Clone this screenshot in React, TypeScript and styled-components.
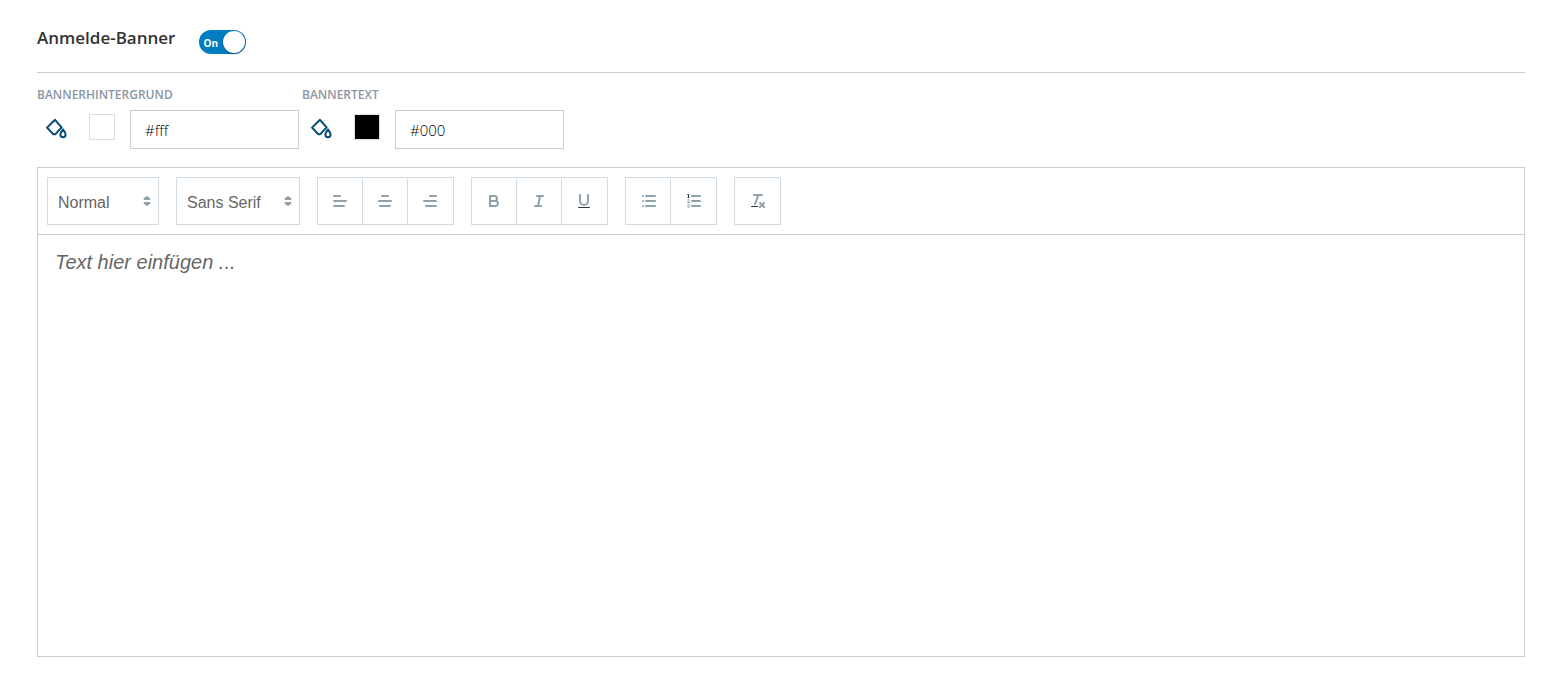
import React, { useState } from "react";
import styled, { createGlobalStyle } from "styled-components";

const GlobalStyle = createGlobalStyle`
  *, *::before, *::after { box-sizing: border-box; }
  body {
    margin: 0;
    background: #fff;
    color: #333;
    font-family: "Open Sans", sans-serif;
  }
`;

const Page = styled.main`
  display: flex;
  flex-direction: column;
  min-height: 100vh;
  padding: 26px 37px 31px;
`;

const Header = styled.header`
  display: flex;
  align-items: flex-start;
  gap: 24px;
  padding-bottom: 18px;
  border-bottom: 1px solid #ccc;
`;

const Title = styled.h1`
  margin: 0;
  font-size: 17px;
  line-height: 24px;
  font-weight: 600;
`;

const Toggle = styled.label`
  position: relative;
  display: flex;
  align-items: center;
  width: 47px;
  height: 24px;
  margin-top: 4px;
  padding: 1px 4px 0;
  border-radius: 12px;
  background: #007dc1;
  color: #fff;
  font-size: 10px;
  line-height: 24px;
  font-weight: 700;
  cursor: pointer;
`;

const ToggleInput = styled.input`
  position: absolute;
  inset: 0;
  width: 100%;
  height: 100%;
  margin: 0;
  opacity: 0;
  cursor: pointer;
`;

const Knob = styled.span`
  position: absolute;
  top: 1px;
  right: 1px;
  width: 22px;
  height: 22px;
  border-radius: 50%;
  background: #fff;
  box-shadow: 0 1px 2px rgba(0, 0, 0, 0.4);
`;

const Colors = styled.div`
  display: flex;
  flex-wrap: wrap;
  gap: 3px;
  padding: 13px 0 18px;
`;

const Field = styled.div`
  display: flex;
  flex-direction: column;
  gap: 6px;
`;

const FieldLabel = styled.label`
  color: #8c96a4;
  font-size: 12px;
  line-height: 18px;
  font-weight: 600;
  text-transform: uppercase;
`;

const FieldRow = styled.div`
  display: flex;
  align-items: flex-start;
`;

const BucketIcon = styled.svg`
  width: 24px;
  height: 24px;
  margin: 6px 21px 0 7px;
  fill: none;
  stroke: #004b77;
  stroke-width: 2;
`;

const Swatch = styled.input`
  appearance: none;
  width: 26px;
  height: 26px;
  margin: 4px 15px 0 0;
  padding: 0;
  border: 1px solid #d5dfe8;
  background: #fff;
  &::-webkit-color-swatch-wrapper { padding: 0; }
  &::-webkit-color-swatch { border: 0; border-radius: 0; }
`;

const HexInput = styled.input`
  width: 169px;
  height: 39px;
  padding: 0 14px;
  border: 1px solid #ccc;
  border-radius: 0;
  color: #000;
  font-family: "Open Sans", sans-serif;
  font-size: 15px;
  font-weight: 300;
`;

const Editor = styled.section`
  flex: 1;
  display: flex;
  flex-direction: column;
  border: 1px solid #ccc;
`;

const Toolbar = styled.div`
  display: flex;
  flex-wrap: wrap;
  gap: 17px;
  padding: 9px;
  border-bottom: 1px solid #ccc;
`;

const Picker = styled.div<{ $width: number }>`
  position: relative;
  width: ${(p) => p.$width}px;
  height: 48px;
`;

const PickerSelect = styled.select`
  appearance: none;
  width: 100%;
  height: 100%;
  padding: 2px 24px 0 10px;
  border: 1px solid #d1dbe3;
  border-radius: 0;
  background: #fff;
  color: #666;
  font-family: "Liberation Sans", Arial, sans-serif;
  font-size: 16px;
`;

const ToolIcon = styled.svg`
  display: block;
  width: 18px;
  height: 18px;
  fill: none;
  stroke: #8fa1ab;
  stroke-width: 2;
  stroke-linecap: round;
  stroke-linejoin: round;
  .thin { stroke-width: 1; }
  .ink { fill: #333; stroke: none; }
`;

const PickerArrows = styled(ToolIcon)`
  position: absolute;
  top: 15px;
  right: 3px;
  fill: #8fa1ab;
  pointer-events: none;
`;

const Group = styled.div`
  display: flex;
  height: 48px;
  padding-top: 1px;
  border: 1px solid #d1dbe3;
`;

const ToolButton = styled.button`
  display: flex;
  justify-content: center;
  width: 45px;
  padding: 13px 0 0;
  border: 0;
  border-right: 1px solid #d1dbe3;
  background: none;
  cursor: pointer;
  &:last-child { border-right-color: transparent; }
`;

const Content = styled.textarea`
  flex: 1;
  min-height: 200px;
  padding: 15px 17px;
  border: 0;
  outline: 0;
  resize: none;
  color: #333;
  font-family: "Liberation Sans", Arial, sans-serif;
  font-size: 20px;
  line-height: 24px;
  &::placeholder {
    color: #666;
    font-style: italic;
    opacity: 1;
  }
`;

const groups: { label: string; icon: React.ReactNode }[][] = [
  [
    { label: "Linksbündig", icon: <path d="M3 9H15M3 14H13M3 4H9" /> },
    { label: "Zentriert", icon: <path d="M15 9H3M14 14H4M12 4H6" /> },
    { label: "Rechtsbündig", icon: <path d="M15 9H3M15 14H5M15 4H9" /> },
  ],
  [
    {
      label: "Fett",
      icon: (
        <>
          <path d="M5 4H9.5A2.5 2.5 0 0 1 12 6.5A2.5 2.5 0 0 1 9.5 9H5Z" />
          <path d="M5 9H10.5A2.5 2.5 0 0 1 13 11.5A2.5 2.5 0 0 1 10.5 14H5Z" />
        </>
      ),
    },
    { label: "Kursiv", icon: <path d="M7 4H13M5 14H11M8 14L10 4" /> },
    {
      label: "Unterstrichen",
      icon: (
        <>
          <path d="M5 3V9a4 4 0 0 0 4 4a4 4 0 0 0 4-4V3" />
          <rect className="ink" x="3" y="15" width="12" height="1" rx="0.5" />
        </>
      ),
    },
  ],
  [
    {
      label: "Aufzählung",
      icon: <path d="M7 4H16M7 9H16M7 14H16M4 4H4M4 9H4M4 14H4" />,
    },
    {
      label: "Nummerierung",
      icon: (
        <g transform="translate(1 0)">
          <path d="M7 4H15M7 9H15M7 14H15" />
          <path className="thin" d="M2.5 5.5H4.5" />
          <path
            className="ink"
            d="M3.5,6A0.5,0.5,0,0,1,3,5.5V3.085l-0.276.138A0.5,0.5,0,0,1,2.053,3c-0.124-.247-0.023-0.324.224-0.447l1-.5A0.5,0.5,0,0,1,4,2.5v3A0.5,0.5,0,0,1,3.5,6Z"
          />
          <path className="thin" d="M4.5,10.5h-2c0-.234,1.85-1.076,1.85-2.234A0.959,0.959,0,0,0,2.5,8.156" />
          <path
            className="thin"
            d="M2.5,14.846a0.959,0.959,0,0,0,1.85-.109A0.7,0.7,0,0,0,3.75,14a0.688,0.688,0,0,0,.6-0.736,0.959,0.959,0,0,0-1.85-.109"
          />
        </g>
      ),
    },
  ],
  [
    {
      label: "Formatierung entfernen",
      icon: (
        <g transform="translate(1 0)">
          <path d="M5 3H13M6 12L9.35 3M11 11L15 15M15 11L11 15" />
          <rect className="ink" x="2" y="14" width="7" height="1" rx="0.5" />
        </g>
      ),
    },
  ],
];

function expandHex(hex: string) {
  return /^#[0-9a-f]{3}$/i.test(hex) ? "#" + hex.slice(1).replace(/./g, "$&$&") : hex;
}

function ColorField({ id, label, initial }: { id: string; label: string; initial: string }) {
  const [value, setValue] = useState(initial);
  return (
    <Field>
      <FieldLabel htmlFor={id}>{label}</FieldLabel>
      <FieldRow>
        <BucketIcon viewBox="0 0 24 24" aria-hidden="true">
          <path d="M11 3.8L3 11.6L9.4 18.2H11.4L17.6 11.4Z" strokeLinejoin="round" />
          <path d="M19 13.6C17.6 15.4 16.4 16.8 16.4 18.6A2.6 2.6 0 0 0 21.6 18.6C21.6 16.8 20.4 15.4 19 13.6Z" />
        </BucketIcon>
        <Swatch
          type="color"
          aria-label={label}
          value={expandHex(value)}
          onChange={(e) => setValue(e.target.value)}
        />
        <HexInput id={id} type="text" value={value} onChange={(e) => setValue(e.target.value)} />
      </FieldRow>
    </Field>
  );
}

function FormatPicker({ label, options, width }: { label: string; options: string[]; width: number }) {
  return (
    <Picker $width={width}>
      <PickerSelect aria-label={label}>
        {options.map((o) => (
          <option key={o}>{o}</option>
        ))}
      </PickerSelect>
      <PickerArrows viewBox="0 0 18 18" aria-hidden="true">
        <path d="M6.5 11L9 13L11.5 11ZM6.5 7L9 5L11.5 7Z" />
      </PickerArrows>
    </Picker>
  );
}

export default function App() {
  return (
    <>
      <GlobalStyle />
      <Page>
        <Header>
          <Title>Anmelde-Banner</Title>
          <Toggle>
            On
            <Knob />
            <ToggleInput type="checkbox" defaultChecked aria-label="Anmelde-Banner" />
          </Toggle>
        </Header>
        <Colors>
          <ColorField id="banner-background" label="Bannerhintergrund" initial="#fff" />
          <ColorField id="banner-text" label="Bannertext" initial="#000" />
        </Colors>
        <Editor>
          <Toolbar>
            <FormatPicker label="Absatzformat" options={["Normal"]} width={112} />
            <FormatPicker label="Schriftart" options={["Sans Serif"]} width={124} />
            {groups.map((tools) => (
              <Group key={tools[0].label}>
                {tools.map((tool) => (
                  <ToolButton key={tool.label} type="button" aria-label={tool.label}>
                    <ToolIcon viewBox="0 0 18 18" aria-hidden="true">
                      {tool.icon}
                    </ToolIcon>
                  </ToolButton>
                ))}
              </Group>
            ))}
          </Toolbar>
          <Content aria-label="Bannerinhalt" placeholder="Text hier einfügen ..." />
        </Editor>
      </Page>
    </>
  );
}
